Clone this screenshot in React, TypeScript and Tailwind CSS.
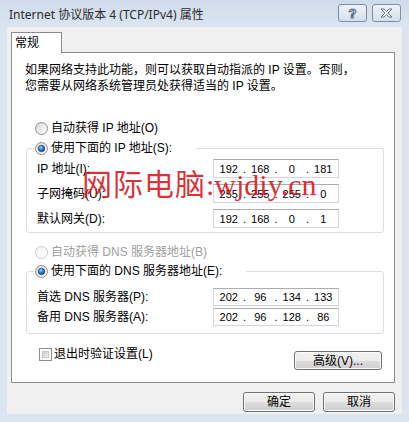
import { Fragment, useId } from 'react'

function Radio({ checked, disabled }: { checked?: boolean; disabled?: boolean }) {
  const id = useId()
  return (
    <svg width="13" height="13" viewBox="0 0 13 13" className="shrink-0">
      <defs>
        <linearGradient id={`${id}f`} x1="0" y1="0" x2="1" y2="1">
          <stop offset="0" stopColor={disabled ? '#f4f4f4' : '#d8d8d8'} />
          <stop offset="1" stopColor="#ffffff" />
        </linearGradient>
        <radialGradient id={`${id}d`} cx="0.4" cy="0.35" r="0.7">
          <stop offset="0" stopColor="#9fd0f5" />
          <stop offset="0.5" stopColor="#2f7bc3" />
          <stop offset="1" stopColor="#123c74" />
        </radialGradient>
      </defs>
      <circle cx="6.5" cy="6.5" r="6" fill={`url(#${id}f)`} stroke={disabled ? '#c9cacc' : '#8e8f8f'} />
      {checked && <circle cx="6.5" cy="6.5" r="3.3" fill={`url(#${id}d)`} stroke="#1f4f87" strokeWidth="0.6" />}
    </svg>
  )
}

function IpBox({ parts }: { parts: string[] }) {
  return (
    <div className="flex h-full w-[126px] items-center border border-[#d2d6dc] border-t-[#abadb3] bg-white px-[1px] font-['Liberation_Sans',sans-serif] text-[11px] leading-[16px]">
      {parts.map((p, i) => (
        <Fragment key={i}>
          {i > 0 && <span className="w-[4px] text-center">.</span>}
          <span className="flex-1 text-center">{p}</span>
        </Fragment>
      ))}
    </div>
  )
}

function Btn({ children, className }: { children: React.ReactNode; className: string }) {
  return (
    <button
      className={`flex items-center justify-center rounded-[3px] border border-[#707070] bg-[linear-gradient(#f2f2f2,#ebebeb_50%,#dddddd_50%,#cfcfcf)] leading-[16px] shadow-[inset_0_0_0_1px_#fbfbfb] ${className}`}
    >
      {children}
    </button>
  )
}

const ipRows = [
  { label: 'IP 地址(I):', parts: ['192', '168', '0', '181'] },
  { label: '子网掩码(U):', parts: ['255', '255', '255', '0'] },
  { label: '默认网关(D):', parts: ['192', '168', '0', '1'] },
]

const dnsRows = [
  { label: '首选 DNS 服务器(P):', parts: ['202', '96', '134', '133'] },
  { label: '备用 DNS 服务器(A):', parts: ['202', '96', '128', '86'] },
]

export default function App() {
  return (
    <div className="flex h-[422px] w-[409px] flex-col bg-[#dae5f1] font-['Liberation_Sans','Noto_Sans_CJK_SC',sans-serif] text-[12px] text-black">
      {/* title bar */}
      <div className="flex h-[27px] shrink-0 items-start justify-between bg-gradient-to-b from-[#d0dcea] to-[#dbe5f1] pl-[9px] pr-[8px]">
        <span className="pt-[7px] font-['Noto_Sans','Noto_Sans_CJK_SC',sans-serif] text-[12px] leading-[16px] text-[#2b2b2b]">
          Internet 协议版本 4 (TCP/IPv4) 属性
        </span>
        <div className="flex gap-[5px] pt-[4px]">
          <div className="flex h-[18px] w-[29px] items-center justify-center rounded-[3px] border border-[#7f8ea3] bg-gradient-to-b from-[#eef3f8] to-[#d5dfeb] font-['Liberation_Sans',sans-serif] text-[13px] font-bold leading-none text-white [-webkit-text-stroke:1px_#56677d]">
            ?
          </div>
          <div className="flex h-[18px] w-[29px] items-center justify-center rounded-[3px] border border-[#7f8ea3] bg-gradient-to-b from-[#eef3f8] to-[#d5dfeb]">
            <svg width="13" height="10" viewBox="0 0 13 10">
              <path d="M1 1h3l2.5 2.5L9 1h3L8 5l4 4H9L6.5 6.5 4 9H1l4-4z" fill="#ffffff" stroke="#56677d" strokeWidth="0.9" strokeLinejoin="round" />
            </svg>
          </div>
        </div>
      </div>

      <div className="mx-[7px] mb-[8px] flex flex-1 flex-col bg-[#f0f0f0] pl-[4px] pr-[7px] pt-[5px]">
        {/* tab */}
        <div className="relative z-10 -mb-px flex h-[21px] w-[51px] items-center border border-b-0 border-[#898c95] bg-white pl-[3px] leading-[16px]">
          常规
        </div>

        {/* panel */}
        <div className="relative flex h-[331px] flex-col border border-[#898c95] bg-white">
          <p className="whitespace-nowrap pl-[13px] pt-[9px] leading-[16px]">
            如果网络支持此功能，则可以获取自动指派的 IP 设置。否则，
            <br />
            您需要从网络系统管理员处获得适当的 IP 设置。
          </p>

          <label className="mt-[26px] flex h-[16px] items-center gap-[3px] pl-[23px] leading-[16px]">
            <Radio />
            自动获得 IP 地址(O)
          </label>

          <fieldset className="ml-[14px] mr-[10px] mt-[4px] rounded-[3px] border border-[#d5dfe5]">
            <legend className="ml-[8px] pr-[24px]">
              <span className="flex h-[16px] items-center gap-[3px] leading-[16px]">
                <Radio checked />
                使用下面的 IP 地址(S):
              </span>
            </legend>
            <div className="flex flex-col gap-[6px] pb-[4px] pt-[3px]">
              {ipRows.map((r) => (
                <div key={r.label} className="flex h-[19px] items-center pl-[10px]">
                  <span className="w-[176px] leading-[16px]">{r.label}</span>
                  <IpBox parts={r.parts} />
                </div>
              ))}
            </div>
          </fieldset>

          <label className="mt-[11px] flex h-[16px] items-center gap-[3px] pl-[23px] leading-[16px] text-[#a0a0a0]">
            <Radio disabled />
            自动获得 DNS 服务器地址(B)
          </label>

          <fieldset className="ml-[14px] mr-[10px] mt-[3px] rounded-[3px] border border-[#d5dfe5]">
            <legend className="ml-[8px] pr-[24px]">
              <span className="flex h-[16px] items-center gap-[3px] leading-[16px]">
                <Radio checked />
                使用下面的 DNS 服务器地址(E):
              </span>
            </legend>
            <div className="flex flex-col gap-[2px] pb-[7px] pt-[9px]">
              {dnsRows.map((r) => (
                <div key={r.label} className="flex h-[18px] items-center pl-[10px]">
                  <span className="w-[176px] leading-[16px]">{r.label}</span>
                  <IpBox parts={r.parts} />
                </div>
              ))}
            </div>
          </fieldset>

          <div className="mt-[12px] flex items-start justify-between pl-[27px] pr-[12px]">
            <label className="flex h-[16px] items-center gap-[2px] leading-[16px]">
              <span className="h-[13px] w-[13px] border border-[#8e8f8f] bg-white p-[2px]">
                <span className="block h-full w-full border border-[#c8c8c8] bg-gradient-to-br from-[#cbcbcb] to-[#f4f4f4]" />
              </span>
              退出时验证设置(L)
            </label>
            <Btn className="mt-[5px] h-[19px] w-[88px]">高级(V)...</Btn>
          </div>

          {/* watermark */}
          <div className="pointer-events-none absolute left-[70px] top-[117px] z-20 whitespace-nowrap font-['Liberation_Serif','Noto_Sans_CJK_SC',serif] text-[30px] leading-[30px] text-[#d8141a]/90">
            <span className="tracking-[1px]">网际电脑</span>:wjdiy.cn
          </div>
        </div>

        <div className="mt-[9px] flex justify-end gap-[8px]">
          <Btn className="h-[20px] w-[72px]">确定</Btn>
          <Btn className="h-[20px] w-[72px]">取消</Btn>
        </div>
      </div>
    </div>
  )
}
